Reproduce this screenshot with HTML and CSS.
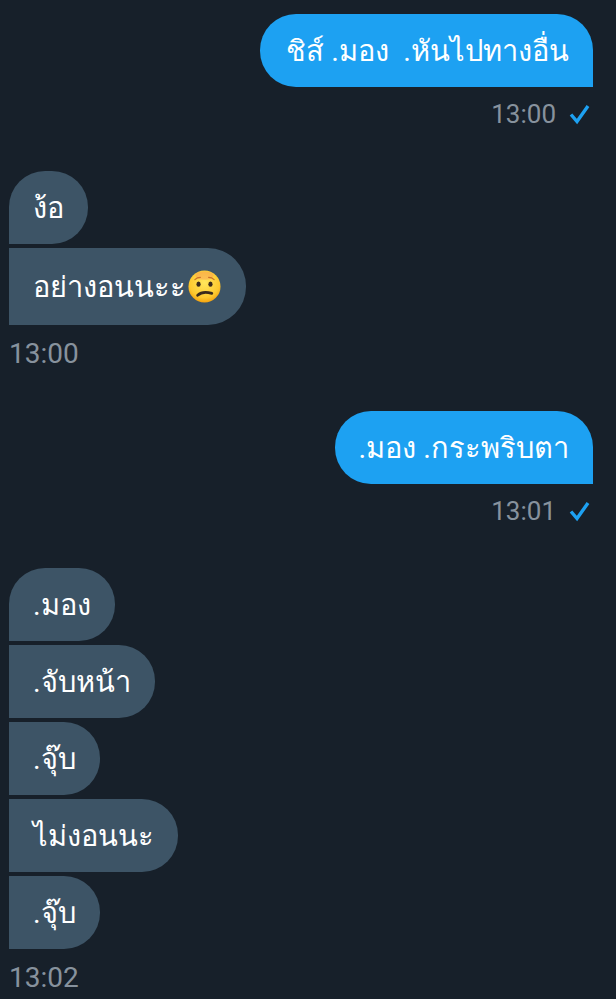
FILE: index.html
```html
<!DOCTYPE html>
<html lang="th">
<head>
  <meta charset="UTF-8">
  <meta name="viewport" content="width=device-width, initial-scale=1.0">
  <title>Chat</title>
  <link rel="stylesheet" href="styles.css">
</head>
<body>
  <main class="chat">
    <section class="group sent">
      <div class="bubble wide">ชิส์ .มอง&nbsp;&nbsp;.หันไปทางอื่น</div>
      <div class="meta">
        <span class="time">13:00</span>
        <svg class="check" viewBox="0 0 24 24"><path d="M2 12.5 L8 19.5 L19 4"/></svg>
      </div>
    </section>

    <section class="group received">
      <div class="bubble">ง้อ</div>
      <div class="bubble with-emoji">อย่างอนนะะ<svg class="emoji" viewBox="0 0 36 36">
          <defs>
            <radialGradient id="face" cx="50%" cy="38%" r="62%">
              <stop offset="0" stop-color="#ffe65c"/>
              <stop offset="0.75" stop-color="#fdc92f"/>
              <stop offset="1" stop-color="#f5a30f"/>
            </radialGradient>
          </defs>
          <circle cx="18" cy="18" r="17.5" fill="url(#face)"/>
          <ellipse cx="18" cy="6" rx="10" ry="4.5" fill="#f78f5a" opacity="0.4"/>
          <path d="M7.5 10.5 Q10 8 13.5 8 M22.5 8 Q26 8 28.5 10.5" fill="none" stroke="#c9702a" stroke-width="1.3" stroke-linecap="round"/>
          <ellipse cx="11.5" cy="15.5" rx="2.3" ry="2.9" fill="#3a2a1c"/>
          <ellipse cx="24.5" cy="15.5" rx="2.3" ry="2.9" fill="#3a2a1c"/>
          <path d="M10.5 27.5 Q16 22.5 26 25.5" fill="none" stroke="#3a2a1c" stroke-width="3" stroke-linecap="round"/>
        </svg></div>
      <div class="meta">
        <span class="time">13:00</span>
      </div>
    </section>

    <section class="group sent">
      <div class="bubble">.มอง .กระพริบตา</div>
      <div class="meta">
        <span class="time">13:01</span>
        <svg class="check" viewBox="0 0 24 24"><path d="M2 12.5 L8 19.5 L19 4"/></svg>
      </div>
    </section>

    <section class="group received">
      <div class="bubble">.มอง</div>
      <div class="bubble">.จับหน้า</div>
      <div class="bubble">.จุ๊บ</div>
      <div class="bubble">ไม่งอนนะ</div>
      <div class="bubble">.จุ๊บ</div>
      <div class="meta">
        <span class="time">13:02</span>
      </div>
    </section>
  </main>
</body>
</html>
```

FILE: styles.css
```css
html, body {
  margin: 0;
  height: 100%;
  overflow: hidden;
}

body {
  background-color: #17202a;
  color: #ffffff;
  font-family: Roboto, sans-serif;
}

.chat {
  display: flex;
  flex-direction: column;
  gap: 30px;
  padding: 14px 23px 0 9px;
}

/* One run of messages from the same side */
.group {
  display: flex;
  flex-direction: column;
  gap: 4px;
}

.sent {
  align-items: flex-end;
}

.received {
  align-items: flex-start;
}

.bubble {
  display: flex;
  align-items: center;
  height: 73px;
  padding: 0 24px;
  box-sizing: border-box;
  font-size: 29px;
  white-space: pre;
  border-radius: 36px;
}

.bubble.wide {
  padding-left: 26px;
}

.sent .bubble {
  background-color: #1da1f2;
  border-bottom-right-radius: 0;
}

.received .bubble {
  background-color: #3d5466;
  border-top-left-radius: 0;
  border-bottom-left-radius: 0;
}

.received .bubble:first-child {
  border-top-left-radius: 36px;
}

.received .with-emoji {
  height: 77px;
  border-radius: 0 38px 38px 0;
}

.emoji {
  width: 33px;
  height: 33px;
  margin: 0 1px 0 2px;
}

.meta {
  display: flex;
  align-items: center;
  gap: 13px;
  height: 54px;
  margin-top: -4px;
}

.received .meta {
  margin-top: -3px;
  margin-bottom: 1px;
}

.time {
  font-size: 26px;
  color: #87929d;
}

.received .time {
  font-size: 28px;
}

.check {
  width: 24px;
  height: 24px;
  fill: none;
  stroke: #1da1f2;
  stroke-width: 3.4;
}
```
